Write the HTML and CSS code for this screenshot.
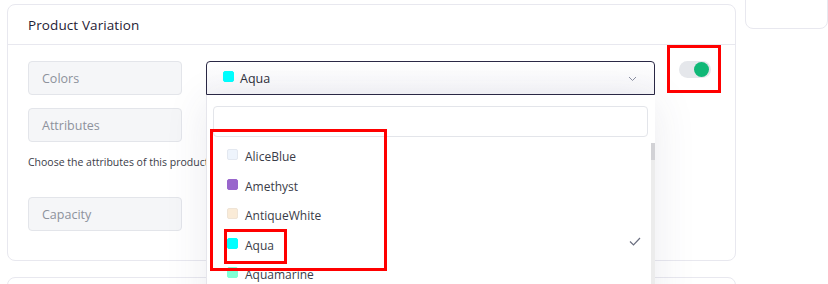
FILE: index.html
```html
<!DOCTYPE html>
<html>
<head>
<meta charset="utf-8">
<link rel="stylesheet" href="styles.css">
</head>
<body>
<div class="page">
  <div class="main-col">
    <section class="card">
      <header class="card-head">Product Variation</header>
      <div class="card-body">
        <div class="row">
          <div class="label-box">Colors</div>
          <div class="select-wrap">
            <div class="select">
              <span class="swatch" style="background:#00ffff;border-color:#00ffff"></span>
              <span class="sel-text">Aqua</span>
              <svg class="chev" width="9" height="6" viewBox="0 0 9 6"><path d="M1 1l3.5 3.5L8 1" fill="none" stroke="#8b8fa0" stroke-width="1"/></svg>
            </div>
            <div class="dropdown">
              <div class="search"></div>
              <div class="list-area">
                <ul class="options">
                  <li class="opt"><span class="swatch" style="background:#eef4fc;border-color:#e3e8f0"></span>AliceBlue</li>
                  <li class="opt"><span class="swatch" style="background:#9966cc;border-color:#9966cc"></span>Amethyst</li>
                  <li class="opt"><span class="swatch" style="background:#faebd7;border-color:#efe4d6"></span>AntiqueWhite</li>
                  <li class="opt sel"><span class="swatch" style="background:#00ffff;border-color:#00ffff"></span>Aqua
                    <svg class="check" width="12" height="9" viewBox="0 0 12 9"><path d="M1 4.5l3.5 3.5L11 1" fill="none" stroke="#6b6f80" stroke-width="1.2"/></svg>
                  </li>
                  <li class="opt"><span class="swatch" style="background:#7fffd4;border-color:#7fffd4"></span>Aquamarine</li>
                </ul>
                <div class="track"><div class="thumb"></div></div>
              </div>
            </div>
          </div>
          <div class="toggle"><span class="knob"></span></div>
        </div>
        <div class="row">
          <div class="label-box">Attributes</div>
        </div>
        <p class="help">Choose the attributes of this product</p>
        <div class="row cap-row">
          <div class="label-box">Capacity</div>
        </div>
      </div>
    </section>
    <section class="card card2"></section>
  </div>
  <div class="side-col">
    <div class="side-card"></div>
  </div>
</div>
<div class="mark mark-toggle"></div>
<div class="mark mark-list"></div>
<div class="mark mark-aqua"></div>
</body>
</html>
```
FILE: styles.css
```css
* { box-sizing: border-box; }
html, body { margin: 0; padding: 0; background: #fff; overflow: hidden; height: 284px; }
body { font-family: "Open Sans", "Noto Sans", sans-serif; color: #2d2f3a; position: relative; }

.page { display: flex; gap: 9px; padding: 4px 0 0 7px; align-items: flex-start; }
.main-col { width: 729px; display: flex; flex-direction: column; gap: 16px; }
.side-col { flex: 1; }
.side-card { margin-top: -50px; height: 75px; border: 1px solid #e8e8ef; border-radius: 8px; }

.card { border: 1px solid #e8e8ef; border-radius: 8px; background: #fff; height: 257px; overflow: visible; }
.card2 { height: 60px; }
.card-head { height: 40px; border-bottom: 1px solid #e8e8ef; padding: 11px 20px 0; font-size: 13.5px; font-weight: 500; color: #1f2235; letter-spacing: 0.1px; }
.card-body { padding: 16px 20px 0; height: 215px; }

.row { display: flex; align-items: flex-start; gap: 24px; margin-bottom: 13px; }
.label-box { width: 154px; height: 34px; background: #f5f6f8; border: 1px solid #e3e5ea; border-radius: 4px; padding: 0 13px; display: flex; align-items: center; font-size: 12.5px; color: #8d929c; flex-shrink: 0; }

.select-wrap { position: relative; width: 449px; flex-shrink: 0; z-index: 2; }
.select { height: 34px; border: 1px solid #2a2845; border-radius: 4px 4px 0 0; background: linear-gradient(#fff, #f6f6f9); display: flex; align-items: center; padding: 0 15px 0 16px; font-size: 12.5px; color: #2d2f3a; }
.swatch { width: 11px; height: 11px; border-radius: 2px; border: 1px solid #ddd; flex-shrink: 0; margin-right: 7px; margin-top: -4px; }
.select .swatch { margin-right: 6px; }
.sel-text { flex: 1; }
.chev { margin-right: 2px; margin-top: 1px; }

.dropdown { position: absolute; left: 0; top: 34px; width: 449px; height: 220px; background: #fff; border-left: 1px solid #e6e6ec; box-shadow: 0 6px 40px rgba(60, 60, 100, 0.10); padding: 11px 7px 0 6px; }
.search { height: 31px; border: 1px solid #e3e5ea; border-radius: 4px; background: #fff; }
.list-area { display: flex; margin-top: 5px; margin-right: -7px; }
.options { list-style: none; margin: 0; padding: 0; flex: 1; }
.opt { height: 29.5px; display: flex; align-items: center; padding-left: 14px; font-size: 12px; color: #3a3c48; position: relative; }
.opt .swatch { margin-right: 7px; }
.check { position: absolute; right: 10px; top: 6px; }
.track { width: 4px; background: #ececec; margin-top: 1px; height: 200px; }
.thumb { height: 17px; background: #d2d2d6; }

.toggle { width: 32px; height: 17px; border-radius: 9px; background: #e5e7eb; position: relative; flex-shrink: 0; }
.knob { position: absolute; right: 2px; top: 1px; width: 15px; height: 15px; border-radius: 50%; background: #10b877; }

.help { margin: 7px 0 0; font-size: 10.5px; color: #3a3c48; height: 42px; }

.mark { position: absolute; border: 3px solid #ff0000; z-index: 5; }
.mark-toggle { left: 667px; top: 45px; width: 54px; height: 48px; }
.mark-list { left: 210px; top: 129px; width: 177px; height: 142px; }
.mark-aqua { left: 224px; top: 229px; width: 63px; height: 35px; }
```
